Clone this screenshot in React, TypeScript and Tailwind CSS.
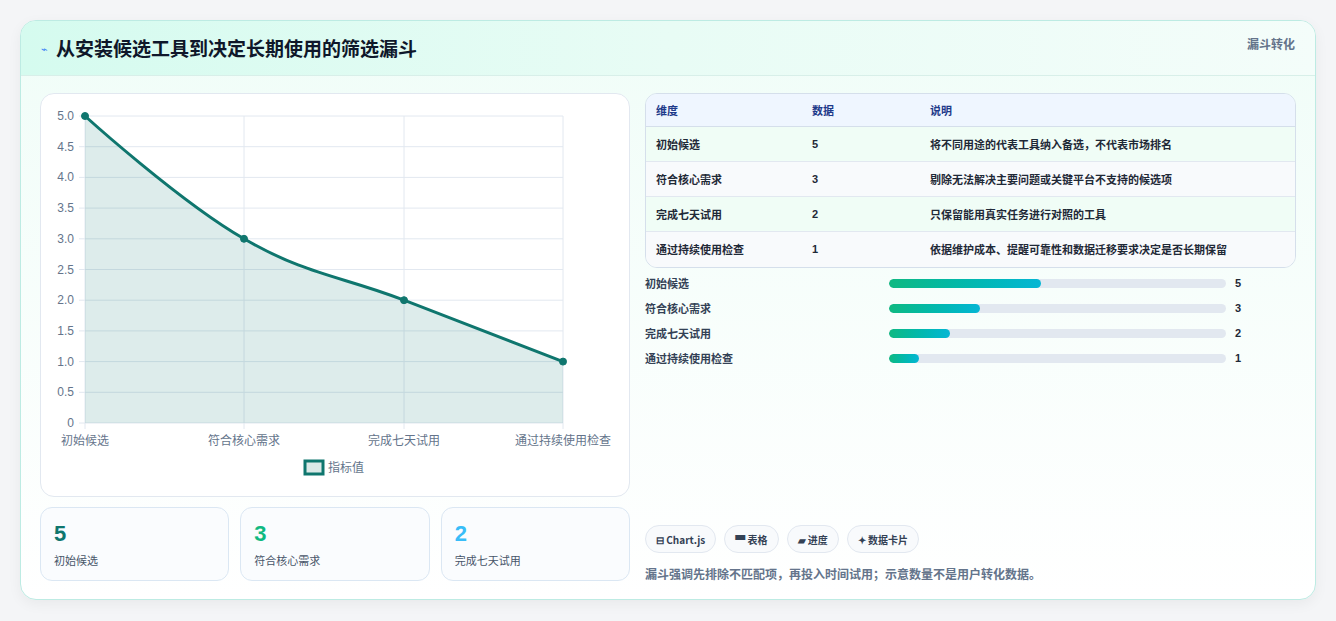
import React from "react";

const rows = [
  { n: "初始候选", v: 5, d: "将不同用途的代表工具纳入备选，不代表市场排名" },
  { n: "符合核心需求", v: 3, d: "剔除无法解决主要问题或关键平台不支持的候选项" },
  { n: "完成七天试用", v: 2, d: "只保留能用真实任务进行对照的工具" },
  { n: "通过持续使用检查", v: 1, d: "依据维护成本、提醒可靠性和数据迁移要求决定是否长期保留" },
];

function Chart() {
  const yTicks = [5, 4.5, 4, 3.5, 3, 2.5, 2, 1.5, 1, 0.5, 0];
  const xs = [44, 203, 363, 522];
  const y = (v: number) => 329 - v * 61.4;
  const line = "M44,22 C44,22 139,108 203,144.8 C267,181.6 299,181.6 363,206.2 C427,230.8 522,267.6 522,267.6";
  const labels = ["初始候选", "符合核心需求", "完成七天试用", "通过持续使用检查"];
  return (
    <svg width="589" height="403" viewBox="0 0 589 403" className="block">
      {yTicks.map((t) => (
        <g key={t}>
          <line x1={38} x2={522} y1={y(t)} y2={y(t)} stroke="#e2e8f0" strokeWidth="1" />
          <text x={33} y={y(t) + 4} textAnchor="end" fontSize="12" fill="#64748b" fontFamily="Liberation Sans, sans-serif">
            {t === 0 ? "0" : t.toFixed(1)}
          </text>
        </g>
      ))}
      {xs.map((x) => (
        <line key={x} x1={x} x2={x} y1={22} y2={335} stroke="#e2e8f0" strokeWidth="1" />
      ))}
      <path d={line + " L522,329 L44,329 Z"} fill="rgba(15,118,110,0.14)" />
      <path d={line} fill="none" stroke="#0f766e" strokeWidth="3" />
      {[5, 3, 2, 1].map((v, i) => (
        <circle key={i} cx={xs[i]} cy={y(v)} r="3.5" fill="#0f766e" stroke="#0f766e" />
      ))}
      {labels.map((l, i) => (
        <text key={l} x={i === 3 ? 522 : i === 0 ? 44 : xs[i]} y={351} textAnchor={i === 0 ? "middle" : "middle"} fontSize="12" fill="#64748b" fontFamily="Noto Sans CJK SC, sans-serif">
          {l}
        </text>
      ))}
      <rect x={264} y={367} width={18} height={13} fill="#dbe9e7" stroke="#0f766e" strokeWidth="3" />
      <text x={287} y={378} fontSize="12" fill="#64748b" fontFamily="Noto Sans CJK SC, sans-serif">指标值</text>
    </svg>
  );
}

export default function App() {
  return (
    <div className="min-h-[621px] bg-[#f4f5f7] pt-[20px] px-[20px] pb-[21px]" style={{ fontFamily: '"Noto Sans CJK SC", "Noto Sans", sans-serif' }}>
      <div className="w-[1296px] h-[580px] rounded-[16px] border border-[#bdebe3] overflow-hidden bg-gradient-to-b from-[#f0fdf8] to-white shadow-[0_4px_14px_rgba(0,0,0,0.05)]">
        <div className="h-[55px] border-b border-[#d8efe9] bg-gradient-to-r from-[#d5fbef] via-[#e8fcf5] to-[#f4fdfa] flex items-center justify-between px-[20px]">
          <div className="flex items-center gap-[8px]">
            <span className="text-[11px] text-[#3b82f6]">⌁</span>
            <span className="text-[19px] font-bold text-[#0f172a]">从安装候选工具到决定长期使用的筛选漏斗</span>
          </div>
          <span className="self-start mt-[14px] text-[12px] font-bold text-[#64748b]">漏斗转化</span>
        </div>
        <div className="flex gap-[15px] px-[19px] pt-[17px]">
          <div className="w-[590px] flex flex-col gap-[10px]">
            <div className="h-[404px] rounded-[14px] border border-[#e2e8f0] bg-white overflow-hidden">
              <Chart />
            </div>
            <div className="grid grid-cols-3 gap-[11px]">
              {[
                { v: "5", l: "初始候选", c: "text-[#0f766e]" },
                { v: "3", l: "符合核心需求", c: "text-[#10b981]" },
                { v: "2", l: "完成七天试用", c: "text-[#38bdf8]" },
              ].map((s) => (
                <div key={s.l} className="h-[74px] rounded-[12px] border border-[#dbe7f3] bg-[#fafcfe] px-[13px] pt-[12px]">
                  <div className={`text-[22px] font-extrabold leading-[28px] ${s.c}`} style={{ fontFamily: "Liberation Sans, sans-serif" }}>{s.v}</div>
                  <div className="text-[11px] text-[#475569] mt-[4px]">{s.l}</div>
                </div>
              ))}
            </div>
          </div>
          <div className="w-[652px] flex flex-col">
            <div className="rounded-[12px] border border-[#d5dfeb] overflow-hidden text-[11px] font-bold">
              <div className="h-[33px] flex items-center bg-[#eff6ff] border-b border-[#d5dfeb] text-[#1e3a8a] px-[10px]">
                <span className="w-[156px]">维度</span>
                <span className="w-[118px]">数据</span>
                <span>说明</span>
              </div>
              {rows.map((r, i) => (
                <div key={r.n} className={`h-[35px] flex items-center px-[10px] text-[#1f2937] ${i < 3 ? "border-b border-[#e2e8f0]" : ""} ${i % 2 === 0 ? "bg-[#f0fdf6]" : "bg-[#f8fafc]"}`}>
                  <span className="w-[156px]">{r.n}</span>
                  <span className="w-[118px]" style={{ fontFamily: "Liberation Sans, sans-serif" }}>{r.v}</span>
                  <span>{r.d}</span>
                </div>
              ))}
            </div>
            <div className="mt-[6px] flex flex-col gap-[6px]">
              {rows.map((r) => (
                <div key={r.n} className="h-[19px] flex items-center text-[11px] font-bold text-[#334155]">
                  <span className="w-[244px]">{r.n}</span>
                  <div className="w-[337px] h-[9px] rounded-full bg-[#e2e8f0] overflow-hidden">
                    <div className="h-full rounded-full bg-gradient-to-r from-[#10b981] to-[#06b6d4]" style={{ width: `${r.v * 9}%` }} />
                  </div>
                  <span className="ml-[9px] text-[#1f2937]" style={{ fontFamily: "Liberation Sans, sans-serif" }}>{r.v}</span>
                </div>
              ))}
            </div>
            <div className="mt-[157px] flex gap-[8px]">
              {["⊟ Chart.js", "▀ 表格", "▰ 进度", "✦ 数据卡片"].map((c) => (
                <span key={c} className="h-[28px] px-[10px] flex items-center rounded-full border border-[#e2e8f0] bg-[#f8fafc] text-[10px] font-bold text-[#334155]">{c}</span>
              ))}
            </div>
            <div className="mt-[12px] text-[12px] font-bold text-[#64748b]">漏斗强调先排除不匹配项，再投入时间试用；示意数量不是用户转化数据。</div>
          </div>
        </div>
      </div>
    </div>
  );
}
